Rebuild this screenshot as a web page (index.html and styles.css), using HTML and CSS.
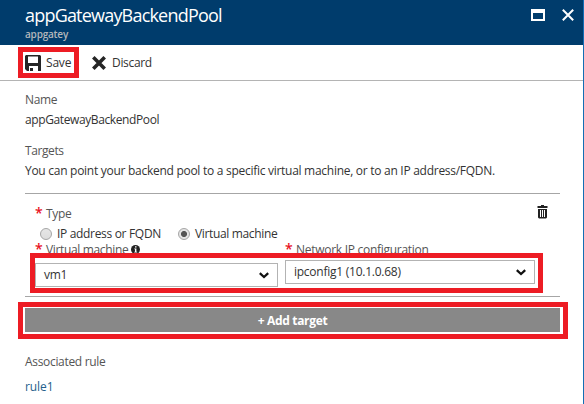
FILE: index.html
```
<!DOCTYPE html>
<html lang="en">
<head>
<meta charset="utf-8">
<title>appGatewayBackendPool</title>
<link rel="stylesheet" href="styles.css">
</head>
<body>
<main class="blade">
  <header class="header">
    <div>
      <h1><span>appGatewayBackendPool</span></h1>
      <p class="subtitle"><span>appgatey</span></p>
    </div>
    <div class="window-actions">
      <svg width="14" height="12" viewBox="0 0 14 12"><path fill="#fff" fill-rule="evenodd" d="M0 0h14v12H0zM2 4v6h10V4z"/></svg>
      <svg width="12" height="12" viewBox="0 0 12 12"><path stroke="#fff" stroke-width="2" d="M.8.8l10.4 10.4M11.2.8L.8 11.2"/></svg>
    </div>
  </header>
  <nav class="toolbar">
    <div class="command save">
      <svg width="16" height="16" viewBox="0 0 16 16"><path fill="#252525" fill-rule="evenodd" d="M1 0h14l1 1v15h-3v-5H4v5H2l-2-2V1zM3 1.500V8h10V1.500z"/><path fill="#252525" d="M5 13h3v3H5z"/></svg>
      <span>Save</span>
    </div>
    <div class="command discard">
      <svg width="14" height="14" viewBox="0 0 14 14"><path stroke="#252525" stroke-width="3.6" d="M1.3 1.3l11.4 11.4M12.7 1.3L1.3 12.7"/></svg>
      <span>Discard</span>
    </div>
  </nav>
  <section class="content">
    <div class="field name">
      <div class="label"><span>Name</span></div>
      <div><span class="t-name">appGatewayBackendPool</span></div>
    </div>
    <div class="field targets">
      <div class="label"><span class="t-targets">Targets</span></div>
      <div><span class="t-desc">You can point your backend pool to a specific virtual machine, or to an IP address/FQDN.</span></div>
    </div>
    <div class="card">
      <div class="type-row">
        <div class="label required"><b>*</b><span>Type</span></div>
        <svg width="11" height="14" viewBox="0 0 11 14"><path fill="#222" fill-rule="evenodd" d="M4 0h3v1h3.500v2H.5V1H4zM1 4h9v8.500l-1 1H2l-1-1zM3 5v7h1V5zM5 5v7h1V5zM7 5v7h1V5z"/></svg>
      </div>
      <div class="radio-row">
        <i class="radio"></i><span class="ip-option">IP address or FQDN</span>
        <i class="radio checked"></i><span class="t-vm">Virtual machine</span>
      </div>
      <div class="label-row">
        <div class="label required"><b>*</b><span class="t-vm">Virtual machine</span>
          <svg width="9" height="9" viewBox="0 0 9 9"><circle cx="4.500" cy="4.500" r="4.500" fill="#222"/><path fill="#fff" d="M4 1.200h1.500v1.300H4zM3.300 3.500h2.100v3.200h.8v.9H3.200v-.9h.8V4.300h-.7z"/></svg>
        </div>
        <div class="label required"><b>*</b><span class="t-net">Network IP configuration</span></div>
      </div>
      <div class="selects">
        <div class="select vm"><span>vm1</span><svg width="10" height="7" viewBox="0 0 10 7"><path fill="none" stroke="#111" stroke-width="2.300" d="M.8 1.200L5 5l4.200-3.800"/></svg></div>
        <div class="select config"><span class="t-config">ipconfig1 (10.1.0.68)</span><svg width="10" height="7" viewBox="0 0 10 7"><path fill="none" stroke="#111" stroke-width="2.300" d="M.8 1.200L5 5l4.200-3.800"/></svg></div>
      </div>
    </div>
    <div class="add-frame"><div class="add"><span>+ Add target</span></div></div>
    <div class="label associated"><span>Associated rule</span></div>
    <a class="rule">rule1</a>
  </section>
</main>
</body>
</html>
```
FILE: styles.css
```
* { box-sizing: border-box; }
body {
  margin: 0;
  background: #fff;
  color: #333;
  font: 12px/20px "Open Sans", "Noto Sans", sans-serif;
  letter-spacing: -0.32px;
}
svg { display: block; flex: none; }
span { white-space: nowrap; }
.blade { width: 584px; height: 404px; overflow: hidden; border-right: 1px solid #146eb4; }
.header { display: flex; justify-content: space-between; height: 45px; padding: 4px 9px 0 25px; background: #003c6c; color: #fff; }
h1 { margin: 0; font-size: 18px; line-height: 23px; font-weight: 400; letter-spacing: -0.8px; }
.subtitle { margin: 0; color: #b3b7bb; font-size: 10px; line-height: 14px; font-weight: 600; letter-spacing: -0.2px; }
.window-actions { display: flex; gap: 17px; padding-top: 5px; }
.toolbar { display: flex; height: 36px; padding: 2px 0 0 18px; border-bottom: 1px solid #b4b4b4; }
.command { display: flex; align-items: center; height: 31px; }
.save { width: 61px; border: 5px solid #ed1c24; padding: 0 0 0 2px; gap: 5px; letter-spacing: -0.2px; }
.save span { padding-top: 1px; }
.discard { margin-left: 13px; gap: 6px; padding-top: 1px; }
.content { padding: 9px 0 0 25px; }
.label { color: #555; }
.t-name { letter-spacing: -0.39px; }
.t-targets { letter-spacing: -0.4px; }
.t-desc { letter-spacing: -0.277px; }
.t-net { letter-spacing: -0.28px; }
.t-config { letter-spacing: -0.25px; }
.t-vm { letter-spacing: -0.35px; }
.targets { margin-top: 11px; }
.card { width: 535px; height: 104px; margin-top: 12px; padding: 10px 0 0 10px; border-top: 1px solid #a6a6a6; border-bottom: 1px solid #a6a6a6; }
.type-row { display: flex; justify-content: space-between; height: 20px; padding-right: 12px; }
.type-row svg { margin-top: 1px; }
.required { display: flex; }
.required b { width: 11px; color: #e81123; font-size: 14px; line-height: 18px; font-weight: 600; }
.radio-row { display: flex; align-items: center; height: 20px; padding-left: 5px; }
.radio { width: 12px; height: 12px; margin-right: 5px; border: 1px solid #a5a5a5; border-radius: 50%; background: linear-gradient(#e6e6e6, #ddd); }
.checked { background: radial-gradient(circle, #555 0 2.700px, #e4e4e4 3.300px); }
.ip-option { width: 121px; }
.label-row { display: grid; grid-template-columns: 250px 1fr; height: 9px; margin-top: -4px; }
.label-row svg { margin: 5px 0 0 3px; }
.selects { position: relative; display: flex; gap: 7px; width: 513px; height: 40px; margin: 4px 0 0 -5px; padding: 2px 0 0; border: 5px solid #ed1c24; background: #fff; }
.select { display: flex; justify-content: space-between; align-items: center; height: 24px; padding: 0 8px; border: 1px solid #b3b3b3; background: #fff; }
.vm { width: 243px; margin-top: 3px; }
.config { width: 250px; }
.add-frame { width: 550px; height: 37px; margin: 5px 0 0 -7px; padding: 1px 3px 2px 2px; border: 5px solid #ed1c24; }
.add { height: 24px; background: #888; color: #fff; font-weight: 700; line-height: 26px; text-align: center; }
.associated { margin-top: 13px; }
.rule { display: block; margin-top: 5px; color: #255f8c; letter-spacing: -0.1px; }
```
